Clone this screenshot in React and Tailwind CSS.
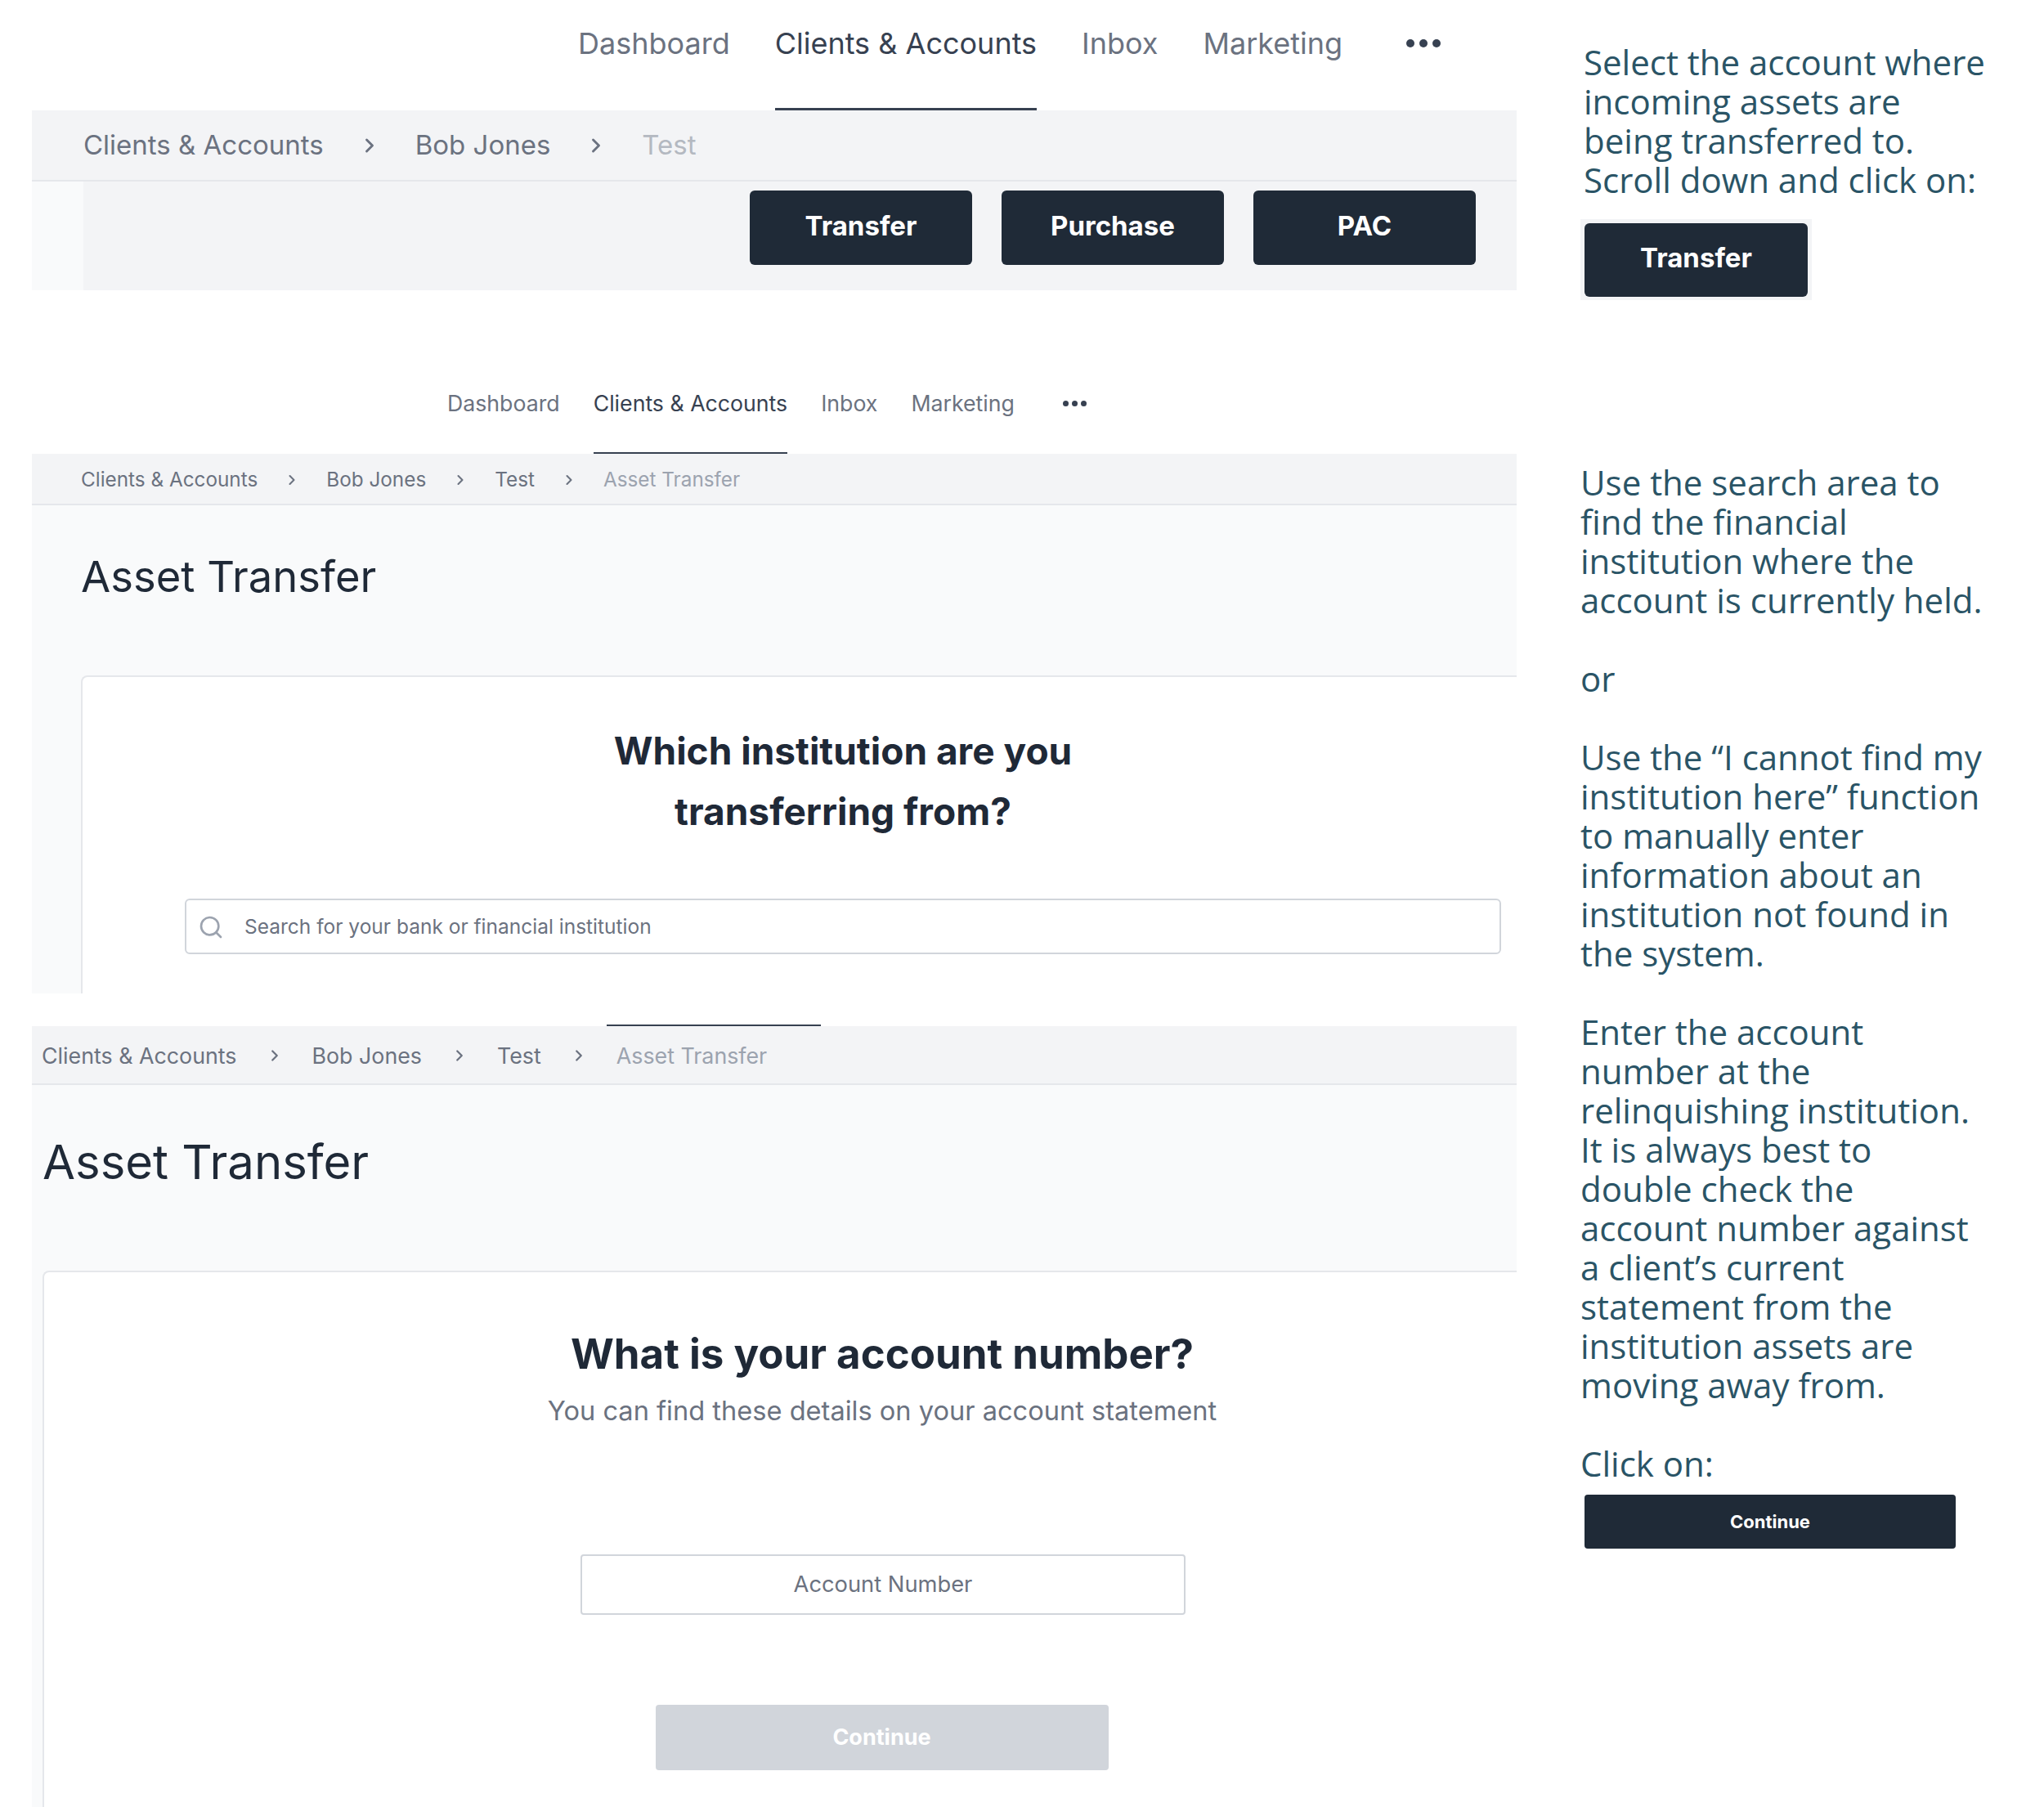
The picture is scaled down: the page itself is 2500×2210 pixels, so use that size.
import { ChevronRight, Search } from "lucide-react";

const NAV = ["Dashboard", "Clients & Accounts", "Inbox", "Marketing"];

function TopNav({ wrap, item, active, idle, dots, dot }) {
  return (
    <div className={wrap}>
      {NAV.map((label) => (
        <div key={label} className={`${item} ${label === "Clients & Accounts" ? active : idle}`}>
          {label}
        </div>
      ))}
      <div className={dots}>
        <span className={dot} />
        <span className={dot} />
        <span className={dot} />
      </div>
    </div>
  );
}

function Crumbs({ wrap, text, last, icon, items }) {
  return (
    <div className={wrap}>
      {items.map((label, i) => (
        <div key={label} className="contents">
          {i > 0 && <ChevronRight className={icon} strokeWidth={2.5} />}
          <span className={i === items.length - 1 ? last : text}>{label}</span>
        </div>
      ))}
    </div>
  );
}

function Lines({ lines }) {
  return (
    <div className="text-[42px] leading-[48px] text-[#2a5466] whitespace-nowrap font-['Open_Sans',sans-serif]">
      {lines.map((line, i) => (
        <div key={i} className="h-[48px]">{line}</div>
      ))}
    </div>
  );
}

export default function App() {
  return (
    <div className="flex w-[2500px] h-[2210px] bg-white overflow-hidden font-['Inter',sans-serif]">
      <div className="ml-[39px] w-[1816px] flex flex-col">
        {/* first capture */}
        <TopNav
          wrap="flex pl-[668px] gap-[55px] h-[135px]"
          item="text-[36px] leading-[106px] pb-[26px] border-b-[3px] whitespace-nowrap"
          active="text-[#374151] border-[#374151]"
          idle="text-[#6b7280] border-transparent"
          dots="flex gap-[6px] ml-[23px] h-[106px] items-center"
          dot="w-[10px] h-[10px] rounded-full bg-[#374151]"
        />
        <div className="h-[87px] bg-[#f3f4f6] border-b-2 border-[#e5e7eb]">
          <Crumbs
            wrap="flex items-center h-[85px] pl-[63px]"
            text="text-[33px] text-[#6b7280] whitespace-nowrap"
            last="text-[33px] text-[#b4b9c1] whitespace-nowrap"
            icon="w-[28px] h-[28px] mx-[42px] text-[#6b7280]"
            items={["Clients & Accounts", "Bob Jones", "Test"]}
          />
        </div>
        <div className="flex h-[133px]">
          <div className="w-[63px] bg-[#f9fafb]" />
          <div className="flex-1 bg-[#f3f4f6] flex justify-end gap-[36px] pr-[50px] pt-[11px]">
            {["Transfer", "Purchase", "PAC"].map((label) => (
              <div key={label} className="w-[272px] h-[91px] pb-[4px] rounded-[6px] bg-[#1f2a37] text-white text-[33px] font-bold flex items-center justify-center">
                {label}
              </div>
            ))}
          </div>
        </div>

        {/* second capture */}
        <TopNav
          wrap="flex mt-[118px] pl-[508px] gap-[41px] h-[82px]"
          item="text-[26.7px] leading-[40px] pb-[40px] border-b-2 whitespace-nowrap"
          active="text-[#374151] border-[#374151]"
          idle="text-[#6b7280] border-transparent"
          dots="flex gap-[4px] ml-[18px] h-[40px] items-center"
          dot="w-[7px] h-[7px] rounded-full bg-[#374151]"
        />
        <div className="h-[63px] bg-[#f3f4f6] border-b-2 border-[#e5e7eb]">
          <Crumbs
            wrap="flex items-center h-[61px] pl-[60px] pt-[2px]"
            text="text-[24.3px] text-[#6b7280] whitespace-nowrap"
            last="text-[24.3px] text-[#9ca3af] whitespace-nowrap"
            icon="w-[20px] h-[20px] mx-[32px] text-[#6b7280]"
            items={["Clients & Accounts", "Bob Jones", "Test", "Asset Transfer"]}
          />
        </div>
        <div className="h-[597px] bg-[#f9fafb] pl-[60px] overflow-hidden">
          <h1 className="mt-[55px] text-[52.5px] leading-[64px] text-[#1f2937]">Asset Transfer</h1>
          <div className="mt-[89px] h-[500px] bg-white border-l-2 border-t-2 border-[#e5e7eb] rounded-tl-[8px] pl-[125px] pr-[19px]">
            <div className="pt-[53px] text-[46px] leading-[74px] font-bold text-[#1f2937] text-center">
              Which institution are you
              <br />
              transferring from?
            </div>
            <div className="mt-[70px] h-[68px] pt-[1px] flex items-center border-2 border-[#d1d5db] rounded-[6px] bg-white">
              <Search className="w-[32px] h-[32px] ml-[14px] text-[#9ca3af]" strokeWidth={2} />
              <span className="ml-[25px] text-[24.5px] text-[#6b7280]">Search for your bank or financial institution</span>
            </div>
          </div>
        </div>

        {/* third capture */}
        <div className="mt-[38px] ml-[703px] w-[262px] h-[2px] bg-[#374151]" />
        <div className="h-[72px] bg-[#f3f4f6] border-b-2 border-[#e5e7eb]">
          <Crumbs
            wrap="flex items-center h-[70px] pl-[12px] pt-[2px]"
            text="text-[26.8px] text-[#6b7280] whitespace-nowrap"
            last="text-[26.8px] text-[#9ca3af] whitespace-nowrap"
            icon="w-[22px] h-[22px] mx-[35px] text-[#6b7280]"
            items={["Clients & Accounts", "Bob Jones", "Test", "Asset Transfer"]}
          />
        </div>
        <div className="flex-1 bg-[#f9fafb] pl-[13px] overflow-hidden">
          <h1 className="mt-[55px] text-[58px] leading-[78px] text-[#1f2937]">Asset Transfer</h1>
          <div className="mt-[94px] w-[2054px] h-[700px] bg-white border-l-2 border-t-2 border-[#e5e7eb] rounded-tl-[8px] flex flex-col items-center">
            <div className="mt-[70px] mr-[2px] text-[51px] leading-[60px] font-bold text-[#1f2937] whitespace-nowrap">What is your account number?</div>
            <div className="mt-[17px] mr-[2px] text-[32.6px] leading-[44px] text-[#6b7280] whitespace-nowrap">You can find these details on your account statement</div>
            <div className="mt-[154px] w-[740px] h-[74px] border-2 border-[#d1d5db] rounded-[4px] flex items-center justify-center text-[27.3px] text-[#6b7280]">
              Account Number
            </div>
            <div className="mt-[110px] mr-[3px] w-[554px] h-[80px] bg-[#d1d5db] rounded-[4px] flex items-center justify-center text-[27px] font-bold text-white">
              Continue
            </div>
          </div>
        </div>
      </div>

      {/* instructions */}
      <div className="ml-[78px] flex flex-col">
        <div className="mt-[52px] pl-1">
          <Lines lines={["Select the account where", "incoming assets are", "being transferred to.", "Scroll down and click on:"]} />
        </div>
        <div className="mt-[24px] w-[283px] h-[99px] bg-[#f3f4f6] flex items-center justify-center">
          <div className="w-[273px] h-[90px] pb-[4px] rounded-[6px] bg-[#1f2a37] text-white text-[33px] font-bold flex items-center justify-center">
            Transfer
          </div>
        </div>
        <div className="mt-[199px]">
          <Lines
            lines={[
              "Use the search area to",
              "find the financial",
              "institution where the",
              "account is currently held.",
              "",
              "or",
              "",
              "Use the “I cannot find my",
              "institution here” function",
              "to manually enter",
              "information about an",
              "institution not found in",
              "the system.",
              "",
              "Enter the account",
              "number at the",
              "relinquishing institution.",
              "It is always best to",
              "double check the",
              "account number against",
              "a client’s current",
              "statement from the",
              "institution assets are",
              "moving away from.",
              "",
              "Click on:",
            ]}
          />
        </div>
        <div className="mt-[14px] ml-[5px] w-[454px] h-[66px] pt-[1px] rounded-[4px] bg-[#1f2a37] text-white text-[22px] font-bold flex items-center justify-center">
          Continue
        </div>
      </div>
    </div>
  );
}
